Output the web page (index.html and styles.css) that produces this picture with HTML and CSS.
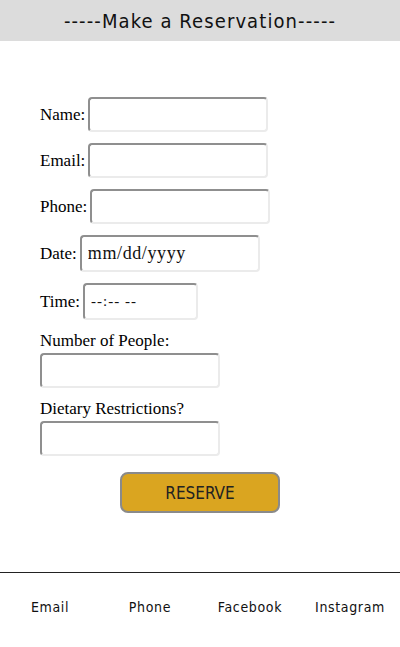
FILE: index.html
```html
<!DOCTYPE html>
<html>
<head>
<meta charset="utf-8">
<link rel="stylesheet" href="styles.css">
</head>
<body>
<header class="top">
  <h1 class="title">-----Make a Reservation-----</h1>
</header>
<main class="form">
  <div class="row"><label>Name:</label><input class="field" type="text"></div>
  <div class="row"><label>Email:</label><input class="field" type="text"></div>
  <div class="row"><label>Phone:</label><input class="field" type="text"></div>
  <div class="row"><label>Date:</label><input class="field date" type="text" placeholder="mm/dd/yyyy"></div>
  <div class="row"><label>Time:</label><input class="field time" type="text" placeholder="--:-- --"></div>
  <div class="stack"><label>Number of People:</label><input class="field" type="text"></div>
  <div class="stack"><label>Dietary Restrictions?</label><input class="field" type="text"></div>
  <div class="actions"><button class="reserve">RESERVE</button></div>
</main>
<footer class="foot">
  <a class="link">Email</a>
  <a class="link">Phone</a>
  <a class="link">Facebook</a>
  <a class="link">Instagram</a>
</footer>
</body>
</html>
```
FILE: styles.css
```css
html, body { margin: 0; padding: 0; background: #fff; }
body { width: 400px; font-family: "Liberation Serif", serif; color: #111; }
.top { background: #dcdcdc; height: 41px; display: flex; align-items: center; justify-content: center; }
.title { margin: 0; font-family: "DejaVu Sans Condensed", "DejaVu Sans", sans-serif; font-weight: normal; font-size: 20px; letter-spacing: 1.1px; color: #111; }
.form { padding: 56px 40px 0; }
.row { display: flex; align-items: center; gap: 3px; margin-bottom: 11px; }
.stack { display: flex; flex-direction: column; align-items: flex-start; gap: 2px; margin-bottom: 11px; }
label { font-family: "Liberation Serif", serif; font-size: 17px; color: #000; }
.field { box-sizing: border-box; width: 180px; height: 35px; border-style: solid; border-width: 2px; border-color: #8f8f8f #ebebeb #ebebeb #8f8f8f; border-radius: 4px; background: #fff; padding: 0 6px; font-family: "Liberation Serif", serif; font-size: 17px; outline: none; }
.field::placeholder { color: #111; }
.date { height: 37px; font-size: 18px; letter-spacing: 0.6px; }
.time { width: 115px; height: 37px; font-size: 15px; letter-spacing: 1px; }
.actions { display: flex; justify-content: center; padding-top: 5px; margin-left: -40px; width: 400px; }
.reserve { width: 160px; height: 41px; background: #daa520; border: 2px solid #8a8a8a; border-radius: 8px; font-family: "DejaVu Sans Condensed", "DejaVu Sans", sans-serif; font-size: 17px; letter-spacing: 0; color: #222; padding: 0; }
.foot { margin-top: 59px; border-top: 1px solid #222; display: grid; grid-template-columns: repeat(4, 1fr); padding-top: 26px; }
.link { text-align: center; font-family: "DejaVu Sans Condensed", "DejaVu Sans", sans-serif; font-size: 14px; letter-spacing: 0.65px; color: #111; }
```
